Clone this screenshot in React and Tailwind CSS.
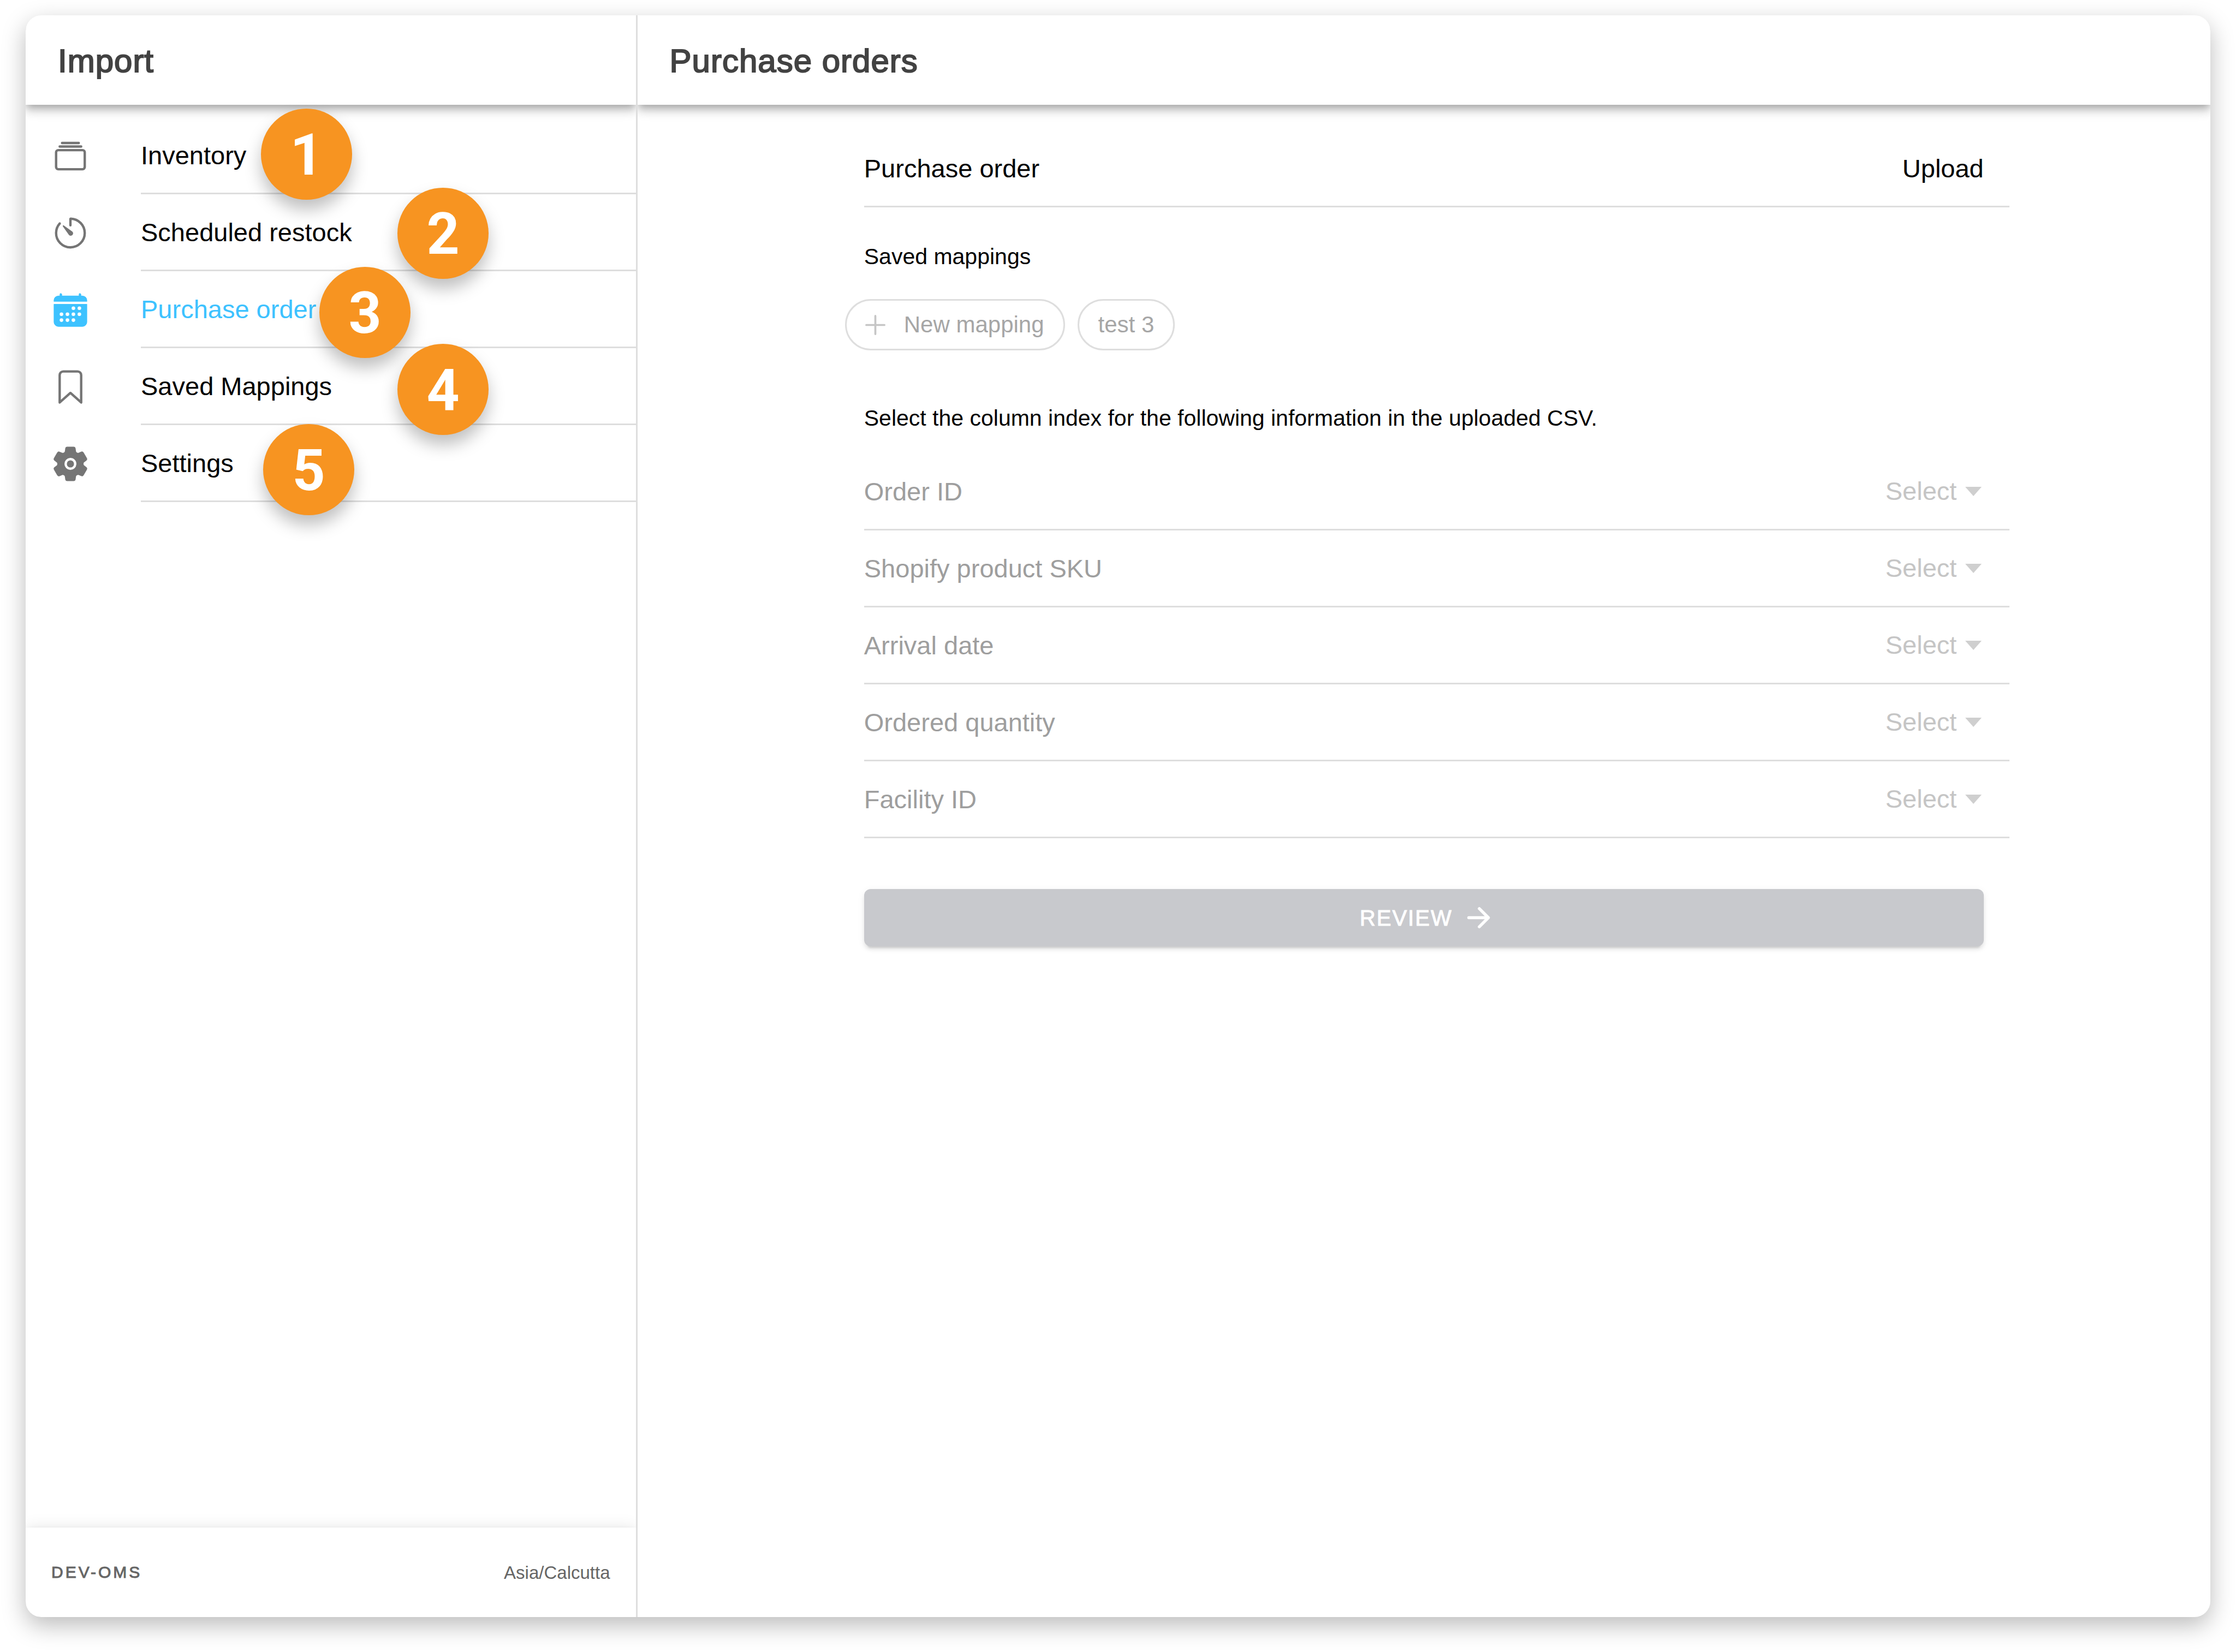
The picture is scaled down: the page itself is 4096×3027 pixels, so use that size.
import {
  IoAddOutline,
  IoAlbumsOutline,
  IoArrowForward,
  IoBookmarkOutline,
  IoCalendar,
  IoSettings,
  IoTimerOutline,
} from "react-icons/io5";

const menu = [
  { label: "Inventory", Icon: IoAlbumsOutline, badge: 1, place: "left-[431px] -top-4" },
  { label: "Scheduled restock", Icon: IoTimerOutline, badge: 2, place: "left-[681px] -top-3" },
  { label: "Purchase order", Icon: IoCalendar, badge: 3, place: "left-[538px] -top-2", active: true },
  { label: "Saved Mappings", Icon: IoBookmarkOutline, badge: 4, place: "left-[681px] -top-2" },
  { label: "Settings", Icon: IoSettings, badge: 5, place: "left-[435px] -top-0.5" },
];

const fields = [
  { id: "order-id", label: "Order ID" },
  { id: "sku", label: "Shopify product SKU" },
  { id: "arrival", label: "Arrival date" },
  { id: "quantity", label: "Ordered quantity" },
  { id: "facility", label: "Facility ID" },
];

const barShadow =
  "shadow-[0_6px_12px_-3px_rgba(0,0,0,0.2),0_12px_15px_0_rgba(0,0,0,0.14),0_3px_29px_0_rgba(0,0,0,0.12)]";

function Header({ children }) {
  return (
    <header className={"flex h-[164px] shrink-0 items-center bg-white px-[59px] pt-1 " + barShadow}>
      <h1 className="text-[60px] leading-none text-[#424242] tracking-[1px] [-webkit-text-stroke:2px_#424242]">
        {children}
      </h1>
    </header>
  );
}

function MenuItem({ label, Icon, badge, place, active }) {
  return (
    <li className="relative flex h-[141px] items-center pl-[47px]">
      <Icon className={active ? "size-[70px] shrink-0 text-[#3dc2ff]" : "size-[70px] shrink-0 text-[#757575]"} />
      <a
        href="#"
        className={
          "ml-[94px] flex h-full flex-1 items-center border-b-[3px] border-[#dedede] text-[47px] leading-none " +
          (active ? "text-[#3dc2ff]" : "text-black")
        }
      >
        {label}
      </a>
      <span
        className={
          "absolute z-10 flex size-[167px] items-center justify-center rounded-full bg-[#f79421] pt-1 font-['Roboto',sans-serif] text-[105px] font-bold leading-none text-white shadow-[0_18px_30px_rgba(0,0,0,0.25)] " +
          place
        }
      >
        {badge}
      </span>
    </li>
  );
}

function Field({ id, label }) {
  return (
    <div className="pl-[47px]">
      <div className="flex h-[141px] items-center justify-between border-b-[3px] border-[#dedede] pr-[47px] text-[47px] leading-none">
        <label htmlFor={id} className="text-[#9e9e9e]">
          {label}
        </label>
        <div className="relative flex items-center">
          <select
            id={id}
            disabled
            className="appearance-none bg-transparent pr-[49px] leading-[60px] text-[#c5c5c5] opacity-100"
          >
            <option>Select</option>
          </select>
          <svg viewBox="0 0 30 17" className="pointer-events-none absolute right-1 h-[17px] w-[30px] fill-[#cfcfcf]">
            <path d="M0 0H30L15 17Z" />
          </svg>
        </div>
      </div>
    </div>
  );
}

export default function App() {
  return (
    <div className="flex min-h-screen bg-white px-[47px] pb-16 pt-7 font-['Liberation_Sans',Arial,sans-serif]">
      <div className="flex flex-1 overflow-hidden rounded-[29px] bg-white shadow-[0_15px_44px_rgba(0,0,0,0.27)]">
        <aside className="flex w-[28%] flex-col overflow-hidden border-r-[3px] border-[#dedede]">
          <Header>Import</Header>
          <nav className="flex-1">
            <ul className="pt-[23px]">
              {menu.map((item) => (
                <MenuItem key={item.label} {...item} />
              ))}
            </ul>
          </nav>
          <footer
            className={"flex h-[164px] shrink-0 items-center justify-between bg-white px-[47px] leading-none text-[#666666] " + barShadow}
          >
            <span className="text-[30px] tracking-[4px] [-webkit-text-stroke:1px_#666666]">DEV-OMS</span>
            <span className="text-[33px]">Asia/Calcutta</span>
          </footer>
        </aside>

        <main className="flex flex-1 flex-col overflow-hidden">
          <Header>Purchase orders</Header>
          <div className="mx-auto w-full max-w-[2145px] pt-[47px]">
            <div className="pl-[47px]">
              <div className="flex h-[141px] items-center justify-between border-b-[3px] border-[#dedede] pr-[47px] text-[47px] leading-none text-black">
                <span>Purchase order</span>
                <button type="button">Upload</button>
              </div>
            </div>

            <h2 className="px-[47px] pt-[60px] text-[41px] leading-[60px] text-black">Saved mappings</h2>
            <div className="mt-12 flex gap-[23px] px-3 text-[42px] leading-none text-[#a6a6a6]">
              <button
                type="button"
                className="flex h-[94px] items-center rounded-full border-[3px] border-[#dedede] pl-[23px] pr-[35px]"
              >
                <IoAddOutline className="mr-[23px] size-[59px] text-[#c6c6c6]" />
                New mapping
              </button>
              <button type="button" className="flex h-[94px] items-center rounded-full border-[3px] border-[#dedede] px-[35px]">
                test 3
              </button>
            </div>

            <p className="px-[47px] pb-[35px] pt-[94px] text-[41px] leading-[60px] text-black">
              Select the column index for the following information in the uploaded CSV.
            </p>

            {fields.map((field) => (
              <Field key={field.id} {...field} />
            ))}

            <div className="px-[47px] pt-[93px]">
              <button
                type="button"
                className="flex h-[105px] w-full items-center justify-center gap-[18px] rounded-xl bg-[#c8c9cd] pl-3 text-[40px] leading-none text-white shadow-[0_9px_3px_-6px_rgba(0,0,0,0.1),0_6px_6px_0_rgba(0,0,0,0.07),0_3px_15px_0_rgba(0,0,0,0.06)]"
              >
                <span className="tracking-[2px] [-webkit-text-stroke:1px_#ffffff]">REVIEW</span>
                <IoArrowForward className="size-[59px]" />
              </button>
            </div>
          </div>
        </main>
      </div>
    </div>
  );
}
